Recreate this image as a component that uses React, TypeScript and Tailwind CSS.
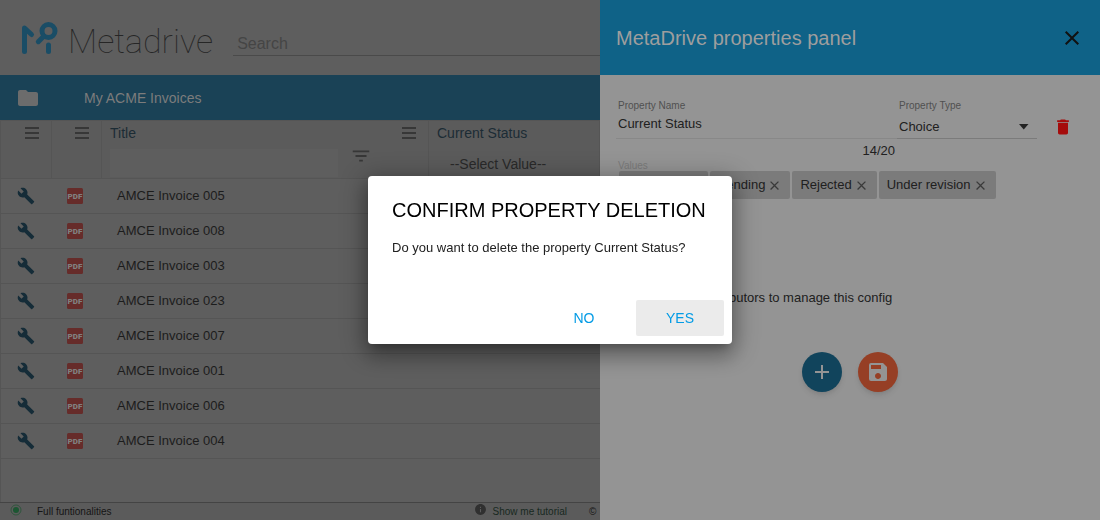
import { ReactNode } from "react";
import {
  MdAdd,
  MdBuild,
  MdClose,
  MdDelete,
  MdFilterList,
  MdFolder,
  MdInfo,
  MdSave,
} from "react-icons/md";

const invoices = ["005", "008", "003", "023", "007", "001", "006", "004"];
const values = ["Approved", "Pending", "Rejected", "Under revision"];

function Logo() {
  return (
    <div className="flex shrink-0 items-center gap-2">
      <svg
        width="40"
        height="34"
        viewBox="0 0 40 34"
        fill="none"
        stroke="#1a4d66"
        strokeWidth="5"
        strokeLinecap="round"
        strokeLinejoin="round"
        aria-hidden="true"
      >
        <path d="M4.500 30.500V7l7 6.500" />
        <circle cx="28.500" cy="10" r="6.500" />
        <path d="M23.500 15.500l-5.200 5.200" />
        <path d="M28.500 24v6.500" />
      </svg>
      <span className="pt-1.5 font-[Roboto] text-[34px] leading-10 font-thin text-[#262626]">
        Metadrive
      </span>
    </div>
  );
}

function MenuButton({ label }: { label: string }) {
  return (
    <button type="button" aria-label={label} className="block shrink-0">
      <svg width="14" height="12" viewBox="0 0 14 12" fill="#373737">
        <path d="M0 0h14v2H0zM0 5h14v2H0zM0 10h14v2H0z" />
      </svg>
    </button>
  );
}

function PdfIcon() {
  return (
    <svg width="16" height="16" viewBox="0 0 16 16" className="block">
      <rect width="16" height="16" rx="1.500" fill="#662c2a" />
      <text
        x="8"
        y="11"
        textAnchor="middle"
        fontFamily="Roboto, sans-serif"
        fontSize="8"
        fontWeight="900"
        fill="#808080"
      >
        PDF
      </text>
    </svg>
  );
}

function HeadCell({ children }: { children?: ReactNode }) {
  return (
    <th className="h-[58px] border-r border-b border-[#555] p-0 pt-1.5 align-top font-normal">
      {children}
    </th>
  );
}

function InvoiceTable() {
  return (
    <table className="w-full table-fixed border-separate border-spacing-0 text-left">
      <colgroup>
        <col className="w-[51px]" />
        <col className="w-[50px]" />
        <col className="w-[327px]" />
        <col />
      </colgroup>
      <thead className="bg-[#5b5b5b] text-sm text-[#1c2c35]">
        <tr>
          <HeadCell>
            <div className="flex justify-end pr-3">
              <MenuButton label="Actions column menu" />
            </div>
          </HeadCell>
          <HeadCell>
            <div className="flex justify-end pr-3">
              <MenuButton label="Type column menu" />
            </div>
          </HeadCell>
          <HeadCell>
            <div className="flex items-start justify-between pr-3 pl-2">
              <span className="-mt-1 leading-5">Title</span>
              <MenuButton label="Title column menu" />
            </div>
            <div className="flex items-start gap-3 pt-1.5 pl-2">
              <input
                type="text"
                aria-label="Filter by title"
                className="h-7 w-[228px] bg-[#5e5e5e] px-2 outline-none"
              />
              <button type="button" aria-label="Filter">
                <MdFilterList size={22} color="#373737" className="-mt-1" />
              </button>
            </div>
          </HeadCell>
          <HeadCell>
            <div className="-mt-1 pl-2 leading-5">Current Status</div>
            <select
              aria-label="Filter by status"
              className="mt-[11px] ml-[21px] block h-5 appearance-none bg-transparent leading-5 text-[#292929] outline-none"
            >
              <option>--Select Value--</option>
            </select>
          </HeadCell>
        </tr>
      </thead>
      <tbody className="text-[13px] text-[#1c1c1c]">
        {invoices.map((number) => (
          <tr key={number} className="h-[35px] *:border-b *:border-[#555]">
            <td className="pl-4">
              <button type="button" aria-label="Edit" className="block">
                <MdBuild size={18} color="#152c38" />
              </button>
            </td>
            <td className="pl-[15px]">
              <PdfIcon />
            </td>
            <td className="pl-[15px]">AMCE Invoice {number}</td>
            <td />
          </tr>
        ))}
      </tbody>
    </table>
  );
}

function Footer() {
  return (
    <footer className="flex h-[18px] shrink-0 items-center border-t border-[#444] bg-[#5b5b5b] text-[10px] whitespace-nowrap text-[#151515]">
      <svg width="12" height="12" viewBox="0 0 12 12" className="mb-1 ml-2.5 shrink-0">
        <circle cx="6" cy="6" r="5" fill="none" stroke="#2f563d" />
        <circle cx="6" cy="6" r="3" fill="#1c5632" />
      </svg>
      <span className="ml-[15px]">Full funtionalities</span>
      <a href="#tutorial" className="ml-auto flex items-center gap-1.5 text-[#18291f]">
        <MdInfo size={13} color="#303030" className="mb-1" />
        Show me tutorial
      </a>
      <span className="ml-[22px] w-[11px] shrink-0">©</span>
    </footer>
  );
}

function PropertiesPanel() {
  return (
    <aside className="flex w-[500px] shrink-0 flex-col bg-[#949494] text-[13px] text-[#202020]">
      <header className="flex h-[75px] items-center justify-between bg-[#0f6287] px-4">
        <h2 className="text-xl text-[#9e9e9e]">MetaDrive properties panel</h2>
        <button type="button" aria-label="Close panel">
          <MdClose size={24} color="#111" />
        </button>
      </header>
      <div className="flex px-4 pt-6">
        <div className="flex-1">
          <div className="flex h-10 flex-col border-b border-[#888] pl-0.5">
            <label htmlFor="name" className="text-[10px] leading-[14px] text-[#505050]">
              Property Name
            </label>
            <input
              id="name"
              defaultValue="Current Status"
              className="h-5 w-full bg-transparent outline-none"
            />
          </div>
          <div className="pt-0.5 pr-0.5 text-right leading-5">14/20</div>
        </div>
        <div className="relative flex h-10 w-[140px] flex-col border-b border-[#7b7b7b] pl-0.5">
          <label htmlFor="type" className="text-[10px] leading-[14px] text-[#505050]">
            Property Type
          </label>
          <select
            id="type"
            className="mt-1 h-5 w-full appearance-none bg-transparent outline-none"
          >
            <option>Choice</option>
          </select>
          <svg
            width="10"
            height="6"
            viewBox="0 0 10 6"
            fill="#222"
            className="pointer-events-none absolute right-2 bottom-2"
          >
            <path d="M0 0h9.500L4.750 5.500z" />
          </svg>
        </div>
        <button
          type="button"
          aria-label="Delete property"
          className="mt-[18px] mr-[11px] ml-4 self-start"
        >
          <MdDelete size={20} color="#a50c0c" />
        </button>
      </div>
      <div className="pl-[18px] text-[10px] leading-[10px] text-[#7a7a7a]">Values</div>
      <ul className="flex gap-0.5 pl-[19px]">
        {values.map((value) => (
          <li
            key={value}
            className="flex h-7 items-center gap-0.5 rounded-xs bg-[#7b7b7b] px-2"
          >
            {value}
            <button type="button" aria-label={`Remove ${value}`}>
              <MdClose size={15} color="#3a3a3a" />
            </button>
          </li>
        ))}
      </ul>
      <p className="pt-[89px] pl-[35px] leading-5">
        Allow only contributors to manage this config
      </p>
      <div className="flex justify-center gap-4 pt-11">
        <button
          type="button"
          aria-label="Add property"
          className="flex size-10 items-center justify-center rounded-full bg-[#11445c] shadow-md"
        >
          <MdAdd size={24} color="#949494" />
        </button>
        <button
          type="button"
          aria-label="Save"
          className="flex size-10 items-center justify-center rounded-full bg-[#963f25] shadow-md"
        >
          <MdSave size={24} color="#949494" />
        </button>
      </div>
    </aside>
  );
}

function ConfirmDialog() {
  return (
    <div className="fixed inset-0 flex items-center justify-center">
      <div
        role="dialog"
        aria-modal="true"
        aria-labelledby="confirm-title"
        className="w-[364px] rounded bg-white text-[#212121] shadow-[0_7px_8px_-4px_rgba(0,0,0,0.2),0_13px_19px_2px_rgba(0,0,0,0.14),0_5px_24px_4px_rgba(0,0,0,0.3)]"
      >
        <div className="px-6 pt-5">
          <h1 id="confirm-title" className="text-xl text-black">
            CONFIRM PROPERTY DELETION
          </h1>
          <p className="mt-3.5 text-[13px] leading-5">
            Do you want to delete the property Current Status?
          </p>
        </div>
        <div className="flex justify-end gap-2 px-2 pt-[42px] pb-2 text-sm text-[#039be5]">
          <button type="button" className="h-9 w-[88px] rounded-xs">
            NO
          </button>
          <button type="button" className="h-9 w-[88px] rounded-xs bg-[#ebebeb]">
            YES
          </button>
        </div>
      </div>
    </div>
  );
}

export default function App() {
  return (
    <div className="flex h-screen overflow-hidden font-['Liberation_Sans',Arial,sans-serif]">
      <main className="flex min-w-0 flex-1 flex-col bg-[#5e5e5e]">
        <header className="flex h-[75px] shrink-0 items-center gap-5 pl-5">
          <Logo />
          <input
            type="search"
            placeholder="Search"
            aria-label="Search"
            className="mt-3.5 h-[22px] min-w-0 flex-1 border-b border-[#4a4a4a] bg-transparent pl-1 text-base outline-none placeholder:text-[#454545]"
          />
        </header>
        <div className="flex h-[45px] shrink-0 items-center gap-11 bg-[#1a4256] pl-4 text-sm text-[#7c7c7c]">
          <MdFolder size={24} color="#6c6c6c" />
          My ACME Invoices
        </div>
        <div className="flex-1 overflow-hidden border-t border-l border-[#555]">
          <InvoiceTable />
        </div>
        <Footer />
      </main>
      <PropertiesPanel />
      <ConfirmDialog />
    </div>
  );
}
